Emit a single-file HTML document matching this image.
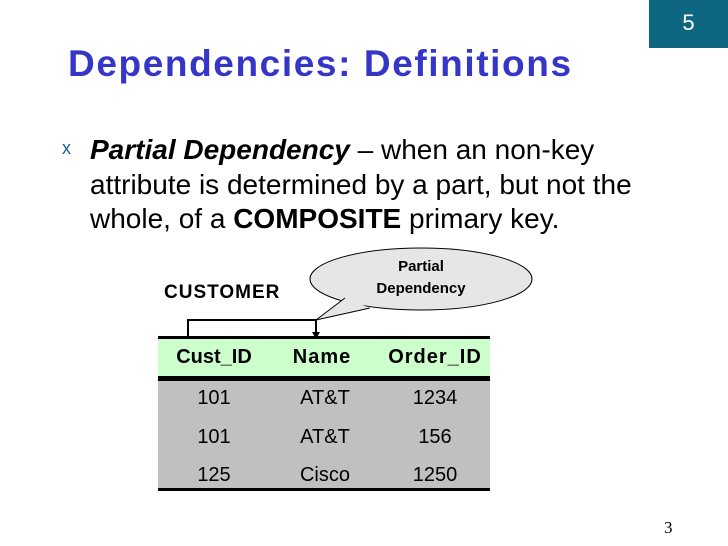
<!DOCTYPE html>
<html><head><style>
body{margin:0;width:728px;height:546px;background:#fff;position:relative;overflow:hidden;font-family:"Liberation Sans",sans-serif}
.a{position:absolute;white-space:nowrap}
</style></head><body>
<div class="a" style="left:649px;top:0;width:79px;height:48px;background:#0e6680;color:#fff;font-size:22px;text-align:center;line-height:46px">5</div>
<div class="a" style="left:68px;top:43px;font-size:37px;letter-spacing:1.6px;font-weight:bold;color:#3535c8">Dependencies: Definitions</div>
<div class="a" style="left:62px;top:138px;font-size:18px;color:#1f5f9f">x</div>
<div class="a" style="left:90px;top:133px;font-size:28px;line-height:34.5px;color:#000"><b><i>Partial Dependency</i></b> – when an non-key<br>attribute is determined by a part, but not the<br>whole, of a <b>COMPOSITE</b> primary key.</div>
<div class="a" style="left:164px;top:282px;font-size:19px;letter-spacing:1px;font-weight:bold">CUSTOMER</div>
<svg class="a" style="left:0;top:0" width="728" height="546">
<ellipse cx="421" cy="279" rx="111" ry="31" fill="#e6e6e6" stroke="#000" stroke-width="1"/>
<path d="M316 320 L345 298 L370 308 Z" fill="#e6e6e6"/>
<path d="M316 320 L345 298 M316 320 L370 308" stroke="#000" stroke-width="1"/>
<path d="M188 338 V320 H316 V334" stroke="#000" stroke-width="2" fill="none"/>
<path d="M312 332 L316 339 L320 332 Z" fill="#000"/>
<rect x="158" y="338" width="332" height="38" fill="#ccffcc"/>
<rect x="158" y="380" width="332" height="108" fill="#c0c0c0"/>
<rect x="158" y="336" width="332" height="3" fill="#000"/>
<rect x="158" y="376" width="332" height="5" fill="#000"/>
<rect x="158" y="488" width="332" height="3" fill="#000"/>
</svg>
<div class="a" style="left:371px;top:256px;width:100px;text-align:center;font-size:15px;font-weight:bold;line-height:22px">Partial<br>Dependency</div>
<div class="a" style="left:158px;top:346px;width:112px;text-align:center;font-size:20px;font-weight:bold">Cust_ID</div>
<div class="a" style="left:270px;top:346px;width:104px;text-align:center;font-size:20px;font-weight:bold;letter-spacing:1px">Name</div>
<div class="a" style="left:380px;top:346px;width:110px;text-align:center;font-size:20px;font-weight:bold;letter-spacing:1px">Order_ID</div>
<div class="a" style="left:158px;top:379px;width:112px;text-align:center;font-size:20px;line-height:38.5px">101<br>101<br>125</div>
<div class="a" style="left:270px;top:379px;width:110px;text-align:center;font-size:20px;line-height:38.5px">AT&amp;T<br>AT&amp;T<br>Cisco</div>
<div class="a" style="left:380px;top:379px;width:110px;text-align:center;font-size:20px;line-height:38.5px">1234<br>156<br>1250</div>
<div class="a" style="left:664px;top:518px;font-family:'Liberation Serif',serif;font-size:17px">3</div>
</body></html>
